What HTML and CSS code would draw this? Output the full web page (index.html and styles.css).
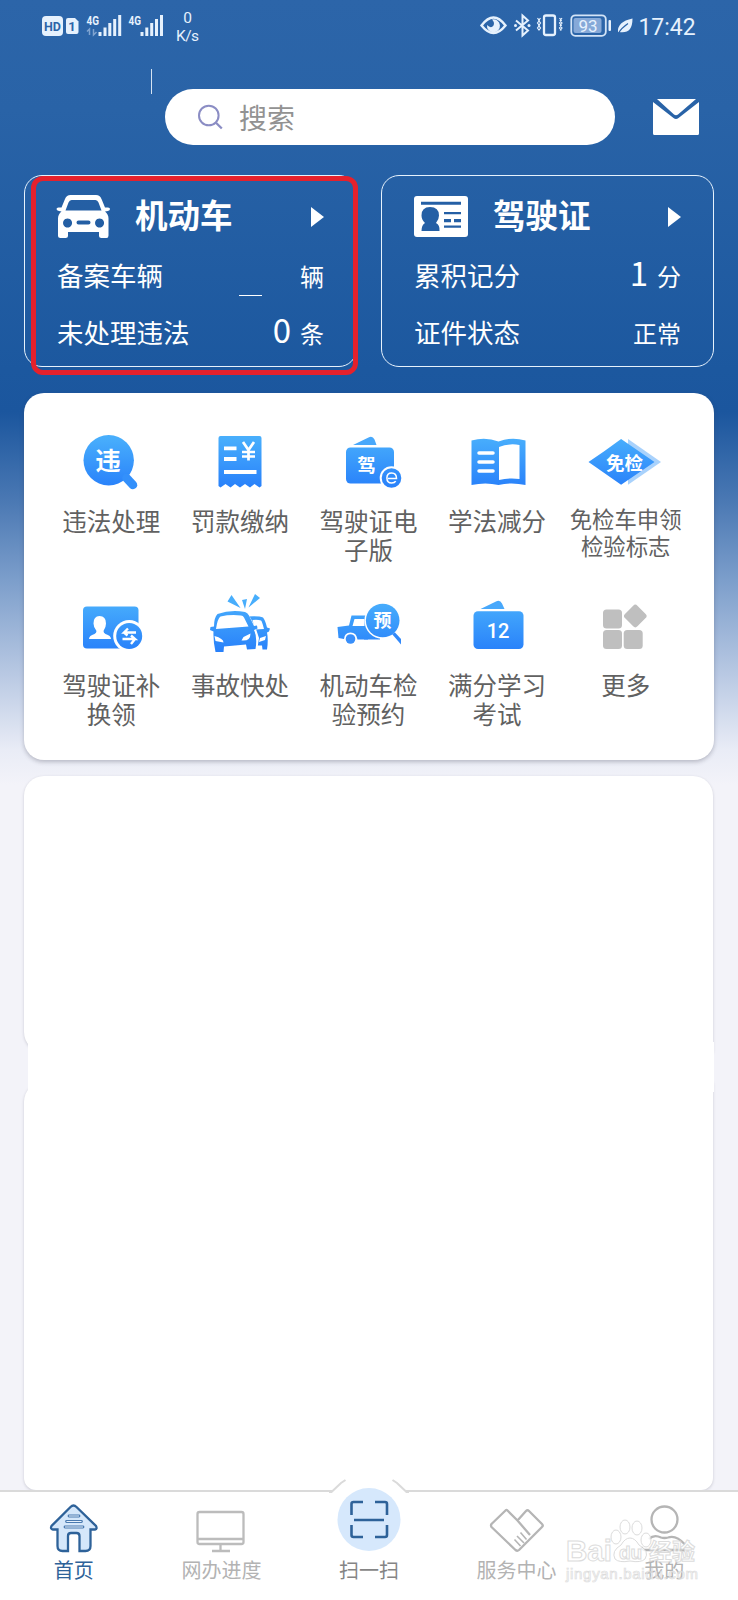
FILE: index.html
```html
<!DOCTYPE html>
<html lang="zh-CN">
<head>
<meta charset="utf-8">
<title>首页</title>
<link rel="stylesheet" href="styles.css">
</head>
<body>
<svg class="defs" width="0" height="0"><defs>
  <linearGradient id="g" gradientUnits="userSpaceOnUse" x1="0" y1="8" x2="0" y2="58"><stop offset="0" stop-color="#48aefc"/><stop offset="1" stop-color="#2880fa"/></linearGradient>
</defs></svg>
<div class="screen">
  <div class="status">
    <svg width="210" height="50" viewBox="0 0 210 50" fill="#e6f1fd">
      <rect x="42" y="16" width="21" height="20" rx="4"/>
      <text class="st b" x="52.5" y="31" font-size="12.5" text-anchor="middle" fill="#2c64a8">HD</text>
      <path d="M68 18h7l3.500 3.500v10.500q0 2-2 2h-8.500q-2 0-2-2v-12q0-2 2-2z"/>
      <text class="st b" x="72" y="31" font-size="13" text-anchor="middle" fill="#2c64a8">1</text>
      <text class="st b" x="86.500" y="24.500" font-size="12.500" textLength="12.500" lengthAdjust="spacingAndGlyphs">4G</text>
      <path d="M89.500 35v-6l-2.500 2.500M93.500 29v6l3-3" fill="none" stroke="#7fa3d0" stroke-width="1.500"/>
      <path d="M98.500 32h3v4h-3zM103.500 27.500h3v8.500h-3zM108.300 23h3v13h-3zM113.200 19h3v17h-3zM118.200 15h3v21h-3z"/>
      <text class="st b" x="128.500" y="24.500" font-size="12.500" textLength="12.500" lengthAdjust="spacingAndGlyphs">4G</text>
      <path d="M140.500 32h3v4h-3zM145.300 27.500h3v8.500h-3zM150.200 23h3v13h-3zM155 19h3v17h-3zM160 15h3v21h-3z"/>
      <text class="st" x="187.500" y="22.500" font-size="15.500" text-anchor="middle">0</text>
      <text class="st" x="187.500" y="41" font-size="15.500" text-anchor="middle" textLength="23">K/s</text>
    </svg>
    <svg width="258" height="50" viewBox="480 0 258 50" fill="#e6f1fd">
      <path d="M481.500 25.500q12-16 24 0q-12 15-24 0z" fill="none" stroke="#e6f1fd" stroke-width="2.400"/>
      <path d="M492 19.500a6.500 6.500 0 1 1-5 5.500q4 4 6.500 0.500q1.500-3-1.500-6z"/>
      <path d="M516 20.500l12 10-5.500 5v-20l5.500 5-12 10" fill="none" stroke="#e6f1fd" stroke-width="2"/>
      <circle cx="515.500" cy="25.500" r="1.500"/><circle cx="529" cy="25.500" r="1.500"/>
      <rect x="544" y="15.500" width="11" height="19.500" rx="2" fill="none" stroke="#e6f1fd" stroke-width="2.300"/>
      <path d="M540.500 18l-1.800 2.500 1.800 2.500-1.800 2.500 1.800 2.500-1.800 2.500M537.500 18l1.800 2.500-1.800 2.500 1.800 2.500-1.800 2.500 1.800 2.500M559.500 18l1.800 2.500-1.800 2.500 1.800 2.500-1.800 2.500 1.800 2.500M562 18l-1.800 2.500 1.800 2.500-1.800 2.500 1.800 2.500-1.800 2.500" fill="none" stroke="#e6f1fd" stroke-width="1.200"/>
      <rect x="571.300" y="15.300" width="34.500" height="20.500" rx="4" fill="none" stroke="#d3e4f7" stroke-width="1.800"/>
      <rect x="573.500" y="18" width="28" height="15" rx="2" fill="#86a9d8"/>
      <text class="st" x="588" y="31.500" font-size="17" text-anchor="middle">93</text>
      <rect x="608.500" y="20" width="2.500" height="11" rx="1"/>
      <path d="M618 32.500q-1-11 14.500-14q0 16-13.500 13.500z"/><path d="M618.500 33q3-5 9.500-9.500" fill="none" stroke="#2c64a8" stroke-width="1.200"/>
      <text class="st" x="638.500" y="35" font-size="24" textLength="57" lengthAdjust="spacingAndGlyphs">17:42</text>
    </svg>
  </div>

  <header class="top">
    <span class="caret"></span>
    <div class="search">
      <svg width="26" height="26" viewBox="0 0 26 26" fill="none" stroke="#8b8dc4" stroke-width="2"><circle cx="10.800" cy="11.500" r="9.800"/><path d="M18 18.700l5.800 5.800" stroke-width="2.300"/></svg>
      <span>搜索</span>
    </div>
    <svg class="mail" width="46" height="36" viewBox="0 0 46 36"><path fill="#fff" d="M0 3l20.500 16q2.500 2 5 0L46 3v31.500q0 1.500-1.500 1.500h-43q-1.500 0-1.500-1.500zM4 0h39L25 15.500q-2 1.500-4 0z"/></svg>
  </header>

  <section class="cards">
    <div class="card">
      <div class="title">
        <svg width="53" height="44" viewBox="0 0 53 44"><path fill="#fff" fill-rule="evenodd" d="M14 1h25q4 0 5.500 4l3.500 8.500h3q2 0 2 1.500t-2 2l-3 .5q3.500 3 3.500 7v17q0 2.500-2 2.500h-5q-2.500 0-2.500-2.500v-3.500h-31v3.500q0 2.500-2.500 2.500h-5q-2.500 0-2.500-2.500v-17q0-4 3.500-7l-2.500-.5q-2.500-.5-2.500-2t2-1.500h3l3.500-8.500q1.500-4 5.500-4zM14.500 6q-2 0-3 2.500l-3 8h36l-3-8q-1-2.500-3-2.500zM10.500 24.500a4.500 4.500 0 1 0 .1 0zM42.500 24.500a4.500 4.500 0 1 0 .1 0zM21.500 26.500h10q2 0 2 2t-2 2h-10q-2 0-2-2t2-2z"/></svg>
        <h2>机动车</h2><i class="arrow"></i>
      </div>
      <div class="row"><span>备案车辆</span><b class="blank"></b><em>辆</em></div>
      <div class="row"><span>未处理违法</span><b>0</b><em>条</em></div>
      <div class="mark"></div>
    </div>
    <div class="card">
      <div class="title">
        <svg width="54" height="41" viewBox="0 0 54 41"><rect width="54" height="41" rx="3" fill="#fff"/><g fill="#245fa5"><path d="M7 5.800h40v3H7zM30 16h17v2.300H30zM30 23h7v3.300h-7zM40 23h7v3.300h-7zM30 29.500h17v2.300H30z"/><path d="M16 11q9 0 9 8.500 0 4-3 7.500 4 2 3.500 8H7.500q0-6 3.500-8-3.500-3.500-3.500-7.500 0-8.500 8.500-8.500z"/></g></svg>
        <h2>驾驶证</h2><i class="arrow"></i>
      </div>
      <div class="row"><span>累积记分</span><b>1</b><em>分</em></div>
      <div class="row"><span>证件状态</span><em>正常</em></div>
    </div>
  </section>

  <section class="panel">
    <div class="item"><svg viewBox="0 0 80 70"><circle cx="37.700" cy="30.300" r="25.200" fill="url(#g)"/><path d="M55.500 48l6.500 7" stroke="#3390fb" stroke-width="8.500" stroke-linecap="round"/><text class="ic" x="37" y="39.500" font-size="25.500">违</text></svg><p>违法处理</p></div>
    <div class="item"><svg viewBox="0 0 80 70"><path fill="url(#g)" d="M20.500 6h39q2 0 2 2v48l-2 1.500-5-3.500-4.500 3.500-5-3.500-5 3.500-5-3.500-4.500 3.500-5-3.500-5 3.500-2-1.500v-48q0-2 2-2z"/><path d="M24 18.300h12.500M24 29h12.500M24 42h32.500" stroke="#fff" stroke-width="3.800" fill="none"/><path d="M42 22h13M42 26.500h13M43 12l5.500 8 5.500-8M48.500 20v10.500" stroke="#fff" stroke-width="2.700" fill="none"/></svg><p>罚款缴纳</p></div>
    <div class="item"><svg viewBox="0 0 80 70"><path fill="#48a8fb" d="M25 15l15.500-7.500q4-2 6 2l2 5.500z"/><rect x="18" y="17.500" width="48" height="36" rx="4.500" fill="url(#g)"/><circle cx="63.500" cy="48" r="11.800" fill="#fff"/><circle cx="63.500" cy="48" r="9.800" fill="url(#g)"/><path d="M60 48.500h8.500q0-5.500-4.800-5.500t-4.800 5 4.800 5q3 0 4-1.800" fill="none" stroke="#fff" stroke-width="1.500"/><text class="ic" x="38.500" y="41.500" font-size="18.500">驾</text></svg><p>驾驶证电<br>子版</p></div>
    <div class="item"><svg viewBox="0 0 80 70"><path fill="url(#g)" d="M14.500 10.500q14-4 27 1 13-5 27-1v44.500q-14-3-27 0-13-3-27 0z"/><path fill="#fff" d="M42 17q10-4 20.500-2v34q-10-1.500-20.500 1z"/><path d="M22 23h14M22 32h14M22 41h14" stroke="#fff" stroke-width="3.500" stroke-linecap="round"/></svg><p>学法减分</p></div>
    <div class="item small"><svg viewBox="0 0 80 70"><path fill="#a9d2fc" d="M42 9l33 23-33 22.700z"/><path fill="url(#g)" d="M2.500 32q16.500-11 32.600-23L68.500 32 35.100 54.700z"/><text class="ic" x="38.500" y="39.500" font-size="18.500">免检</text></svg><p>免检车申领<br>检验标志</p></div>

    <div class="item"><svg viewBox="0 0 80 70"><rect x="12" y="12.500" width="55.500" height="42" rx="4" fill="url(#g)"/><path fill="#fff" d="M28.500 22q6.500 0 6.500 7.500 0 4-2.500 7.500 0 2 2 3 5.500 1.500 5.500 5H18q0-3.500 5.500-5 2-1 2-3-3-3.500-3-7.500 0-7.500 6-7.500z"/><circle cx="58.200" cy="42" r="16" fill="#fff"/><circle cx="58.200" cy="42" r="13" fill="url(#g)"/><path d="M65 38.500H53l4-4M53 38.500l3.500 3M51.500 45H64l-4-3.500M64 45l-4 5" fill="none" stroke="#fff" stroke-width="2.400"/></svg><p>驾驶证补<br>换领</p></div>
    <div class="item"><svg viewBox="0 0 80 70"><g fill="url(#g)"><path fill-rule="evenodd" d="M46 22.500q13-1 17 1 2 2 4 10l3 1-1 3-2 1q1.500 7 0 17h-4.500l-.5-4H53V38z M52.500 26l2.500 9.500 9-.500q-2-8-3-8.500-3-1-8.500-.5zM66 42l-6 2-1 4 6-2z"/><path fill="#fff" d="M18 19q13-6 28-2 2 2 5 8l4 7 4 12-2 13-9 1-6-5-28 2z"/><path fill-rule="evenodd" d="M17.500 20q13-4.500 27.500-2 2.500 .5 4 3.500l5 10.500 3-.5.5 3-3.500 1.500q3.500 7 1.500 19l-8.500.5-1-5-22 2-.5 5.500h-8q-2.500-12-2-20.500l-3.500-1.500 .5-3 3.500-.5q0-9 3.500-12.500zM20.500 22.500q-3 2-4.500 12.500l32.500-2.500-4.500-9q-1-1.800-3-2-10.500-1.200-20.500 1zM14.500 42l1 5 8 1.500q0-4-9-6.500zM50.500 39.500l-7 3.500-2 3.500q9 1 9-7z"/><path d="M27.500 7.500l4-6.500 9 13zM42 6l5-1-2 10zM48.500 13.500l6.500-13.500 5 4z"/></g></svg><p>事故快处</p></div>
    <div class="item"><svg viewBox="0 0 80 70"><path fill="url(#g)" fill-rule="evenodd" d="M23.500 21.500h16.500v24H29.500q-1-7-7-7t-6.500 6.500l-5.500-1L9.500 33l11.500-1.500zM26.500 25l-2 7h12v-7z"/><path fill="url(#g)" d="M36 32h16v13.500H36z"/><circle cx="22.500" cy="45" r="4.800" fill="#398ffa"/><circle cx="54.700" cy="26.500" r="18.300" fill="#fff"/><path fill="#3289fa" d="M64 40l3-1.500 6 6.500v5.500z"/><circle cx="54.700" cy="26.500" r="16.800" fill="url(#g)"/><text class="ic" x="54.500" y="32.800" font-size="18">预</text></svg><p>机动车检<br>验预约</p></div>
    <div class="item"><svg viewBox="0 0 80 70"><path fill="#48a8fb" d="M23.500 15l15.500-7.500q4-2 6 2l2.500 5.500z"/><rect x="16.500" y="17.300" width="50" height="37.700" rx="4.500" fill="url(#g)"/><text class="ic num" x="41" y="44" font-size="20">12</text></svg><p>满分学习<br>考试</p></div>
    <div class="item"><svg viewBox="0 0 80 70" fill="#bfbfbf"><rect x="17" y="15.500" width="19" height="19" rx="3.500"/><rect x="17" y="36" width="19" height="19" rx="3.500"/><rect x="37.700" y="36" width="19" height="19" rx="3.500"/><rect x="40.500" y="13.200" width="17.600" height="17.600" rx="3" transform="rotate(45 49.300 22)"/></svg><p>更多</p></div>
  </section>

  <section class="feed">
    <div class="block first"></div>
    <div class="joint"></div>
    <div class="block second"></div>
  </section>

  <nav class="tabs">
    <div class="tab on"><svg viewBox="0 0 60 60"><path d="M29.500 7.500q1.500 0 3 1.500L52 28q1.500 3-1 3.500h-4.500v16.500q0 5-5 5h-6V38q0-3-3-3h-5.500q-3 0-3 3v15H18.500q-5 0-5-5V31.500H9q-3-.5-1.500-3.500L26.500 9Q28 7.500 29.500 7.500z" fill="#d5e7fa" stroke="#2e6299" stroke-width="2.300"/><path d="M25 18h10M22.500 23.500h15M21 29h18" stroke="#4a7ab0" stroke-width="2.800" stroke-linecap="round"/><path d="M25 18h10M22.500 23.500h15M21 29h18" stroke="#e6f1fc" stroke-width="1"/></svg><span>首页</span></div>
    <div class="tab"><svg viewBox="0 0 60 60" fill="none" stroke="#bcbcbc" stroke-width="2.300"><rect x="6.500" y="14" width="46" height="32" rx="2"/><path d="M6.500 41h46M29.500 46.500v6M21 53h18"/></svg><span>网办进度</span></div>
    <div class="tab scan">
      <svg class="bump" width="80" height="72" viewBox="0 0 80 72"><path d="M0 16L2 14 14.500 1.500Q17 0 20 0H60Q63 0 65.500 1.500L78 14L80 16V20H0z" fill="#fff"/><path d="M0 13h2.500L12 4l4.500-3M80 13h-2.500L68 4l-4.500-3" fill="none" stroke="#dadada" stroke-width="2"/><circle cx="40" cy="40.500" r="31.500" fill="#d6e8fc"/><path d="M22.500 36V25q0-2 2-2H34M46 23h10q2 0 2 2v11M58 46v10q0 2-2 2H46M34 58h-9.500q-2 0-2-2V46M25 41h30" fill="none" stroke="#2e6299" stroke-width="2.600"/></svg>
      <span>扫一扫</span></div>
    <div class="tab"><svg viewBox="0 0 60 60" fill="none" stroke="#b5b5b5" stroke-width="2.300" stroke-linejoin="round"><path d="M18.500 12.500L4.500 26q-1 1.500 0 3L28.500 52q1.800 1.500 3.500 0l23-23q1.500-1.500 0-3L42 13q-1.500-1.500-3 0L30.500 22.500 20.500 12.500q-1-1-2 0zM30.500 22.500l12.500 14.500"/><path d="M27.500 41.500l6 6.500M30 38l7 7M33.500 34.500l6 7" stroke-width="1.600"/></svg><span>服务中心</span></div>
    <div class="tab"><svg viewBox="0 0 60 60" fill="none" stroke="#b5b5b5" stroke-width="2.300"><circle cx="30.500" cy="21.500" r="13"/><path d="M15 41q5-5 12-1.500 3.500 1 7 0 8-3 17 7M7.500 49q1 3 3 3h40"/></svg><span>我的</span></div>
    <svg class="watermark" width="140" height="72" viewBox="0 0 140 72" fill="#fff" stroke="#d4d4d4">
      <g stroke-width="1"><ellipse cx="54" cy="20" rx="5" ry="7"/><ellipse cx="63" cy="10" rx="5" ry="7"/><ellipse cx="75" cy="11" rx="5" ry="7"/><ellipse cx="84" cy="23" rx="5" ry="7"/><path d="M68 21q5 0 9 7 11 6 6 14-4 4-15 2-11 2-15-2-4-8 6-14 4-7 9-7z"/></g>
      <text x="4" y="44" font-size="29" textLength="46" lengthAdjust="spacingAndGlyphs" class="wm">Bai</text><text x="57" y="42" font-size="19" textLength="23" class="wm">du</text><text x="87" y="43" font-size="23" textLength="46" class="wm cn">经验</text>
      <text x="4" y="62" font-size="15" textLength="132" class="wm url">jingyan.baidu.com</text>
    </svg>
  </nav>
</div>
</body>
</html>
```

FILE: styles.css
```css
* { box-sizing: border-box; }
body { margin: 0; font-family: "Noto Sans CJK SC", sans-serif; }
h2, p { margin: 0; }
em, i { font-style: normal; }
svg { display: block; overflow: visible; flex: none; }
.defs { position: absolute; }
.screen {
  width: 738px; height: 1600px; overflow: hidden;
  display: flex; flex-direction: column;
  background: linear-gradient(#2c65a9 0, #2963a7 110px, #1c589f 370px, #1b569e 412px, #4a78b3 500px, #7c9ecb 580px, #b9c9e3 675px, #e9ecf6 750px, #f3f3f9 785px);
}
.status { height: 60px; display: flex; justify-content: space-between; }
.st { font-family: Roboto, sans-serif; }
.b { font-weight: 700; }

.top { height: 115px; display: flex; align-items: flex-start; padding-left: 151px; }
.caret { width: 1px; height: 25px; margin-top: 9px; background: #d5e3f2; }
.search {
  width: 450px; height: 56px; margin: 29px 0 0 13px; padding-left: 33px;
  display: flex; align-items: center; gap: 15px;
  border-radius: 28px; background: #fff; color: #929292; font-size: 28px;
}
.mail { margin: 39px 0 0 38px; }

.cards { display: flex; gap: 24px; padding-left: 24px; height: 218px; }
.card {
  position: relative; width: 333px; height: 192px; padding: 11px 32px 0;
  border: 1.5px solid #e6f2fd; border-radius: 18px; color: #fff;
}
.title { height: 58px; display: flex; align-items: center; }
.title h2 { font-size: 32.500px; line-height: 56px; margin: -5px 0 0 25px; }
.arrow { margin: 2px 0 0 auto; border: 10px solid transparent; border-left: 13px solid #fff; border-right: 0; }
.row { height: 56.500px; display: flex; align-items: baseline; line-height: 56px; font-size: 26.500px; }
.title + .row { margin-top: 2px; }
.row span { margin-right: auto; }
.row b { font-weight: 400; font-size: 33px; line-height: 40px; margin-right: 9px; }
.row em { font-size: 24px; }
.row .blank { width: 23px; height: 1px; margin-right: 38px; background: #fff; position: relative; top: 10px; }
.mark { position: absolute; left: 6px; top: 0; width: 327px; height: 199px; border: 5px solid #e5212c; border-radius: 12px; }

.panel {
  width: 690px; height: 367px; margin-left: 24px; padding: 37px 23px 0;
  display: grid; grid-template-columns: repeat(5, 128.600px); grid-auto-rows: 163.500px;
  border-radius: 20px; background: #fff; box-shadow: 0 2px 4px rgba(60, 60, 80, .3);
}
.item { display: flex; flex-direction: column; align-items: center; text-align: center; color: #616161; font-size: 24.500px; line-height: 29px; }
.item svg { width: 80px; height: 70px; }
.item p { margin-top: 6px; white-space: nowrap; }
.small p { margin-top: 5px; font-size: 22.400px; line-height: 27px; }
.ic { fill: #fff; text-anchor: middle; font-weight: 700; }
.num { font-family: Roboto, sans-serif; font-weight: 500; }

.feed { width: 690px; height: 714px; margin: 16px 0 0 24px; display: flex; flex-direction: column; }
.block { width: 689px; background: #fff; box-shadow: 0 1px 3px rgba(60, 60, 80, .22); }
.first { height: 276px; border-radius: 20px 20px 0 20px; }
.joint { width: 686px; height: 50px; margin: -10px 0 -10px 4px; position: relative; z-index: 1; background: #fff; }
.second { height: 408px; border-radius: 20px 0 12px 12px; }

.tabs {
  position: relative; height: 110px; padding-top: 6px; display: grid; grid-template-columns: repeat(5, 147.600px);
  border-top: 2px solid #dadada; background: #fff; z-index: 2;
}
.tab { display: flex; flex-direction: column; align-items: center; font-size: 20px; line-height: 28px; color: #b3b3b3; }
.tab svg { width: 60px; height: 60px; }
.tab span { margin-top: -2px; }
.tab.on { color: #2e6299; }
.scan { color: #858585; }
.scan .bump { width: 80px; height: 72px; margin: -19px 0 7px; }
.watermark { position: absolute; left: 562px; top: 25px; opacity: .8; }
.wm { font-family: "Liberation Sans", sans-serif; font-weight: 700; stroke-width: 1; }
.cn { font-family: "Noto Sans CJK SC", sans-serif; }
.url { stroke-width: .7; font-weight: 400; }
```
